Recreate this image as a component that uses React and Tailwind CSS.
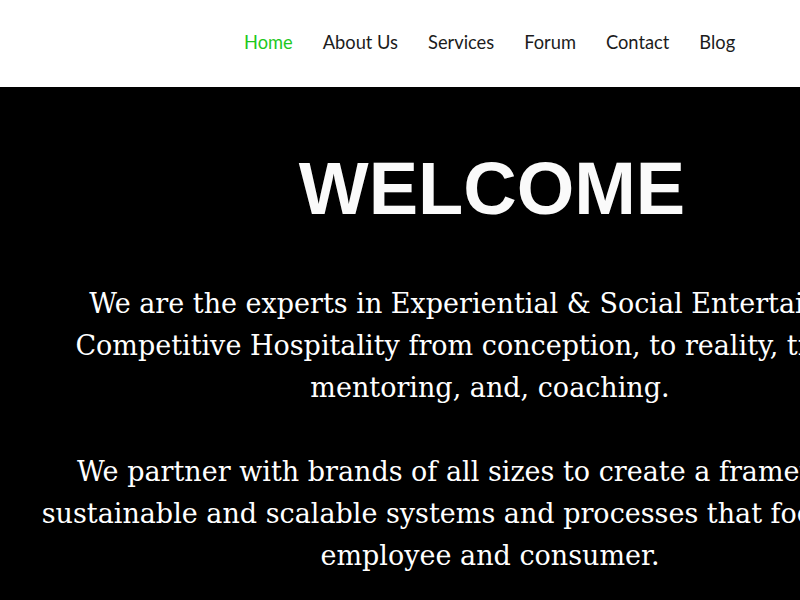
const links = ['Home', 'About Us', 'Services', 'Forum', 'Contact', 'Blog'];

export default function App() {
  return (
    <div className="w-[1275px] min-h-[4216px] bg-white">
      {/* Header */}
      <header className="h-[87px] w-[980px] flex items-center">
        <nav className="ml-[244px] -mt-[2px] flex items-center gap-[30px] font-['Lato',sans-serif] text-[18.3px] text-[#1c1c1c]">
          {links.map((l, i) => (
            <a key={l} href="#" className={i === 0 ? 'text-[#1ec81e]' : ''}>
              {l}
            </a>
          ))}
        </nav>
      </header>

      {/* Hero */}
      <section className="bg-black h-[1400px]">
        <div className="w-[980px] pt-[65px] text-center text-white">
          <h1 className="pl-[4px] font-['Liberation_Sans',Arial,sans-serif] font-bold text-[74px] leading-none text-[#fafafa]">
            WELCOME
          </h1>
          <p className="mt-[57px] font-['DejaVu_Serif',serif] text-[27px] leading-[42px]">
            We are the experts in Experiential &amp; Social Entertainment
            <br />
            Competitive Hospitality from conception, to reality, training,
            <br />
            mentoring, and, coaching.
            <br />
            <br />
            We partner with brands of all sizes to create a framework of
            <br />
            sustainable and scalable systems and processes that focus on the
            <br />
            employee and consumer.
          </p>
        </div>
      </section>
    </div>
  );
}
